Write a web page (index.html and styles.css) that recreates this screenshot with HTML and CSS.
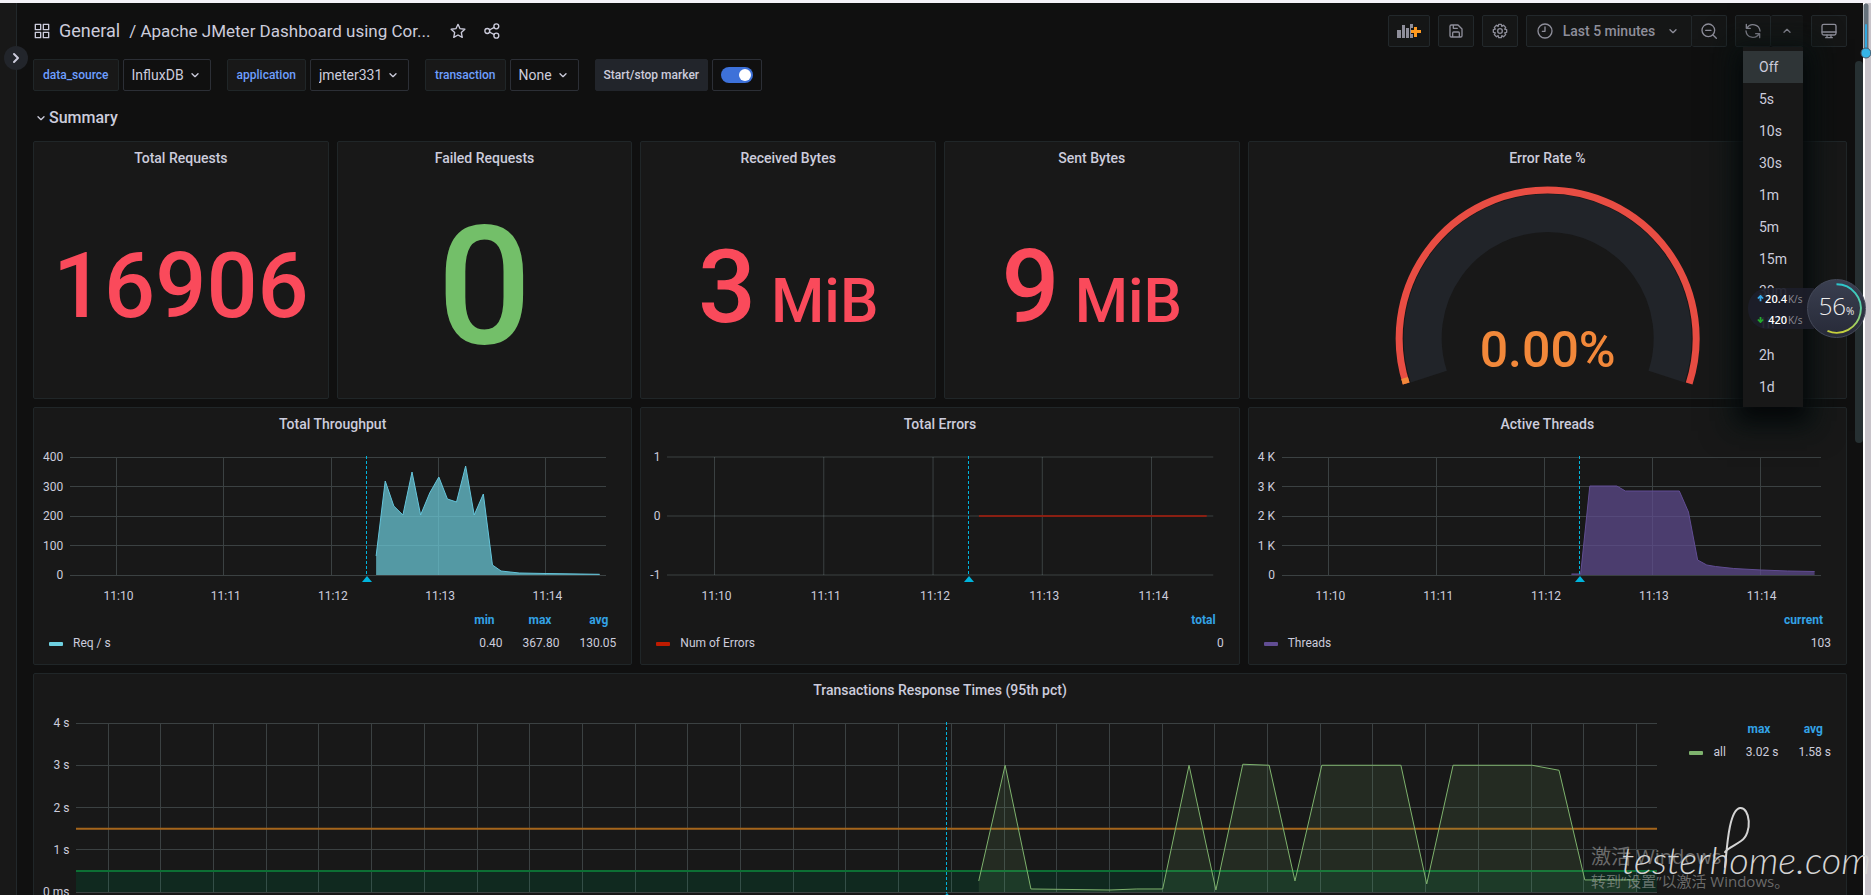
FILE: index.html
```html
<!DOCTYPE html>
<html lang="en">
<head>
<meta charset="utf-8">
<title>Apache JMeter Dashboard</title>
<link rel="stylesheet" href="styles.css">
</head>
<body>
<svg class="defs" aria-hidden="true">
  <symbol id="chev" viewBox="0 0 24 24"><path d="M7.500 10l4.500 4.500 4.500-4.500"/></symbol>
  <symbol id="chev-up" viewBox="0 0 24 24"><path d="M7.500 14l4.500-4.500 4.500 4.500"/></symbol>
</svg>
<div class="app">
  <nav class="sidebar">
    <button class="expand" aria-label="Expand sidebar"><svg class="icon bold" viewBox="0 0 24 24"><path d="M9 6l6 6-6 6"/></svg></button>
  </nav>
  <main class="main">
    <header class="header">
      <svg class="icon title-icon" viewBox="0 0 24 24"><path d="M2 2h8v8H2zM14 2h8v8h-8zM2 14h8v8H2zM14 14h8v8h-8z"/></svg>
      <h1 class="title"><a href="#">General</a><a href="#" class="name">/ Apache JMeter Dashboard using Cor...</a></h1>
      <button class="bare" aria-label="Mark as favorite"><svg class="icon" viewBox="0 0 24 24"><path d="M12 2l3.100 6.500 7.200.9-5.300 4.900 1.400 7.200L12 18l-6.400 3.500L7 14.300 1.700 9.400l7.200-.9z"/></svg></button>
      <button class="bare" aria-label="Share dashboard"><svg class="icon" viewBox="0 0 24 24"><circle cx="5" cy="12" r="3.700"/><circle cx="18.500" cy="5" r="3.700"/><circle cx="18.500" cy="19" r="3.700"/><path d="M8 10.500l7.500-4M8 13.500l7.500 4"/></svg></button>
      <div class="toolbar">
        <button class="tool add" aria-label="Add panel"><svg class="add-icon" viewBox="0 0 26 16"><path class="bars" d="M1 7h4v8H1zM6 2h3v13H6zM10 5h3v10h-3zM14 1h3v4h-2v6h2v4h-3z"/><path class="plus" d="M18 4h3v3h4v3h-4v4h-3v-4h-3V7h3z"/></svg></button>
        <button class="tool" aria-label="Save dashboard"><svg class="icon" viewBox="0 0 24 24"><path d="M3 5a2 2 0 0 1 2-2h10l6 6v10a2 2 0 0 1-2 2H5a2 2 0 0 1-2-2zM8 3v5h6M7 21v-6a1.500 1.500 0 0 1 1.500-1.500h7A1.500 1.500 0 0 1 17 15v6"/></svg></button>
        <button class="tool" aria-label="Dashboard settings"><svg class="icon" viewBox="0 0 24 24"><path d="M10 2h4l.7 3 2.600-1.600 3.200 3.200L19 9.300l3 .7v4l-3 .7 1.500 2.700-3.200 3.200-2.600-1.600L14 22h-4l-.7-3-2.600 1.600-3.200-3.200L5 14.700 2 14v-4l3-.7-1.500-2.700 3.200-3.200L9.300 5z"/><circle cx="12" cy="12" r="3.500"/></svg></button>
        <div class="group">
          <button class="tool range"><svg class="icon" viewBox="0 0 24 24"><circle cx="12" cy="12" r="10.500"/><path d="M12 6v6.500H8"/></svg><span>Last 5 minutes</span><svg class="icon"><use href="#chev"/></svg></button>
          <button class="tool zoom" aria-label="Zoom out"><svg class="icon" viewBox="0 0 24 24"><circle cx="11" cy="11" r="9.500"/><path d="M7 11h8M18 18L23 23"/></svg></button>
        </div>
        <div class="group">
          <button class="tool" aria-label="Refresh"><svg class="icon" viewBox="0 0 24 24"><path d="M2 2v6h6M22 22v-6h-6M2.800 8A10.500 10.500 0 0 1 22.500 12M21.200 16A10.500 10.500 0 0 1 1.500 12"/></svg></button>
          <button class="tool narrow" aria-label="Refresh interval" aria-expanded="true"><svg class="icon"><use href="#chev-up"/></svg></button>
          <div class="menu">
            <button class="on">Off</button><button>5s</button><button>10s</button><button>30s</button><button>1m</button><button>5m</button><button>15m</button><button>30m</button><button>1h</button><button>2h</button><button>1d</button>
          </div>
        </div>
        <button class="tool" aria-label="Cycle view mode"><svg class="icon" viewBox="0 0 24 24"><rect x="1.500" y="2" width="21" height="16" rx="2.500"/><path d="M1.500 13.500h21M9 18v4M15 18v4M7 22h10"/></svg></button>
      </div>
    </header>

    <form class="vars">
      <div class="var"><label for="ds">data_source</label><span class="pick"><select id="ds"><option>InfluxDB</option></select><svg class="icon"><use href="#chev"/></svg></span></div>
      <div class="var"><label for="ap">application</label><span class="pick"><select id="ap"><option>jmeter331</option></select><svg class="icon"><use href="#chev"/></svg></span></div>
      <div class="var"><label for="tr">transaction</label><span class="pick"><select id="tr"><option>None</option></select><svg class="icon"><use href="#chev"/></svg></span></div>
      <div class="var"><label class="marker-label" for="mk">Start/stop marker</label><span class="switch-box"><input class="switch" type="checkbox" id="mk" checked></span></div>
    </form>

    <button class="row-title"><svg class="icon"><use href="#chev"/></svg>Summary</button>

    <div class="grid">
      <section class="panel w4"><h2>Total Requests</h2><div class="stat red s90">16906</div></section>
      <section class="panel w4"><h2>Failed Requests</h2><div class="stat green s166">0</div></section>
      <section class="panel w4"><h2>Received Bytes</h2><div class="stat red s102"><span>3<span class="unit"> MiB</span></span></div></section>
      <section class="panel w4"><h2>Sent Bytes</h2><div class="stat red s102"><span>9<span class="unit"> MiB</span></span></div></section>
      <section class="panel w8"><h2>Error Rate %</h2>
        <svg class="gauge" viewBox="0 0 320 224">
          <path class="track" d="M41.100 202.600a125 125 0 1 1 237.800 0"/>
          <path class="limit" d="M18.500 209.500a148.500 148.500 0 1 1 283 0"/>
          <path class="low" d="M18.500 209.500l-1.600-5.500"/>
          <text x="160" y="193">0.00%</text>
        </svg>
      </section>

      <section class="panel w8"><h2>Total Throughput</h2>
        <div class="chart">
          <div class="y"><span>400</span><span>300</span><span>200</span><span>100</span><span>0</span></div>
          <div class="plot">
            <svg viewBox="0 0 1000 118" preserveAspectRatio="none">
              <path class="lines" d="M0 0H1000M0 29.500H1000M0 59H1000M0 88.500H1000M0 118H1000M87 0V118M287 0V118M487 0V118M687 0V118M887 0V118"/>
              <path class="area cyan" d="M571 118V99L588 24 604 49 621 58 638 15 654 58 671 36 688 20 704 42 721 45 738 9 754 58 771 37 788 108 804 114 821 115 838 116 888 116.500 988 117.300V118"/>
              <path class="curve cyan" d="M571 99L588 24 604 49 621 58 638 15 654 58 671 36 688 20 704 42 721 45 738 9 754 58 771 37 788 108 804 114 821 115 838 116 888 116.500 988 117.300"/>
            </svg>
            <i class="mark" style="left:55.100%"></i>
          </div>
          <div class="x"><span>11:10</span><span>11:11</span><span>11:12</span><span>11:13</span><span>11:14</span></div>
        </div>
        <table class="legend">
          <tr><th></th><th>min</th><th>max</th><th>avg</th></tr>
          <tr><td><i class="sw cyan"></i>Req / s</td><td>0.40</td><td>367.80</td><td>130.05</td></tr>
        </table>
      </section>

      <section class="panel w8"><h2>Total Errors</h2>
        <div class="chart">
          <div class="y"><span>1</span><span>0</span><span>-1</span></div>
          <div class="plot">
            <svg viewBox="0 0 1000 118" preserveAspectRatio="none">
              <path class="lines" d="M0 0H1000M0 59H1000M0 118H1000M87 0V118M287 0V118M487 0V118M687 0V118M887 0V118"/>
              <path class="curve red-line" d="M571 59H988"/>
            </svg>
            <i class="mark" style="left:55.100%"></i>
          </div>
          <div class="x"><span>11:10</span><span>11:11</span><span>11:12</span><span>11:13</span><span>11:14</span></div>
        </div>
        <table class="legend">
          <tr><th></th><th>total</th></tr>
          <tr><td><i class="sw crimson"></i>Num of Errors</td><td>0</td></tr>
        </table>
      </section>

      <section class="panel w8"><h2>Active Threads</h2>
        <div class="chart">
          <div class="y"><span>4 K</span><span>3 K</span><span>2 K</span><span>1 K</span><span>0</span></div>
          <div class="plot">
            <svg viewBox="0 0 1000 118" preserveAspectRatio="none">
              <path class="lines" d="M0 0H1000M0 29.500H1000M0 59H1000M0 88.500H1000M0 118H1000M87 0V118M287 0V118M487 0V118M687 0V118M887 0V118"/>
              <path class="area violet" d="M537 118V117H554L571 29H621L637 34H737L754 55 771 103 788 108 804 109.500 838 111.500 889 113 938 114 988 114.500V118"/>
              <path class="curve violet" d="M537 117H554L571 29H621L637 34H737L754 55 771 103 788 108 804 109.500 838 111.500 889 113 938 114 988 114.500"/>
            </svg>
            <i class="mark" style="left:55.100%"></i>
          </div>
          <div class="x"><span>11:10</span><span>11:11</span><span>11:12</span><span>11:13</span><span>11:14</span></div>
        </div>
        <table class="legend">
          <tr><th></th><th>current</th></tr>
          <tr><td><i class="sw violet"></i>Threads</td><td>103</td></tr>
        </table>
      </section>

      <section class="panel w24"><h2>Transactions Response Times (95th pct)</h2>
        <div class="wide">
          <div class="chart tall">
            <div class="y"><span>4 s</span><span>3 s</span><span>2 s</span><span>1 s</span><span>0 ms</span></div>
            <div class="plot">
              <svg viewBox="0 0 3000 168" preserveAspectRatio="none">
                <rect class="ok-zone" x="0" y="147" width="3000" height="21"/>
                <path class="lines" d="M0 0H3000M0 42H3000M0 84H3000M0 126H3000M0 168H3000M61 0v168m100-168v168m100-168v168m100-168v168m100-168v168m100-168v168m100-168v168m100-168v168m100-168v168m100-168v168m100-168v168m100-168v168m100-168v168m100-168v168m100-168v168m100-168v168m100-168v168m100-168v168m100-168v168m100-168v168m100-168v168m100-168v168m100-168v168m100-168v168m100-168v168m100-168v168m100-168v168m100-168v168m100-168v168m100-168v168"/>
                <path class="warn-line" d="M0 105H3000"/><path class="ok-line" d="M0 147H3000"/>
                <path class="area leaf" d="M1713 168V157L1763 42 1812 165 1962 166 2013 165H2062L2112 42 2163 166 2214 41 2264 42 2313 157 2364 42H2514L2563 160 2613 42H2763L2814 47 2863 156H2963V168"/>
                <path class="curve leaf" d="M1713 157L1763 42 1812 165 1962 166 2013 165H2062L2112 42 2163 166 2214 41 2264 42 2313 157 2364 42H2514L2563 160 2613 42H2763L2814 47 2863 156H2963"/>
              </svg>
              <i class="mark" style="left:55%"></i>
            </div>
          </div>
          <table class="legend side">
            <tr><th></th><th>max</th><th>avg</th></tr>
            <tr><td><i class="sw leaf"></i>all</td><td>3.02 s</td><td>1.58 s</td></tr>
          </table>
        </div>
      </section>
    </div>
  </main>
  <div class="scroll"><i></i></div>
  <div class="edge"></div>

  <div class="activate" lang="zh"><p>激活 Windows</p><p class="sub">转到“设置”以激活 Windows。</p></div>
  <div class="brand">testerhome.com<svg viewBox="0 0 40 64"><path d="M9 62C11 42 13 5 24 3 34 2 37 28 25 36 18 41 12 43 9 47"/></svg></div>

  <svg class="slider" viewBox="0 0 14 60"><path class="rail" d="M7 3V50"/><path class="fill" d="M7 22V50"/><circle cx="7" cy="50" r="5"/></svg>

  <div class="monitor">
    <div class="rates">
      <p><svg viewBox="0 0 8 8"><path class="up" d="M4 1v6M1 4l3-3 3 3"/></svg><b>20.4</b><span>K/s</span></p>
      <p><svg viewBox="0 0 8 8"><path class="down" d="M4 1v6M1 4l3 3 3-3"/></svg><b>420</b><span>K/s</span></p>
    </div>
    <div class="dial">
      <svg viewBox="0 0 60 60"><defs><linearGradient id="g" x1="0" y1="0" x2="0" y2="1"><stop offset="0" stop-color="#2cc6cc"/><stop offset=".5" stop-color="#5fd0a0"/><stop offset="1" stop-color="#c8cf3a"/></linearGradient></defs><path d="M30 4.500A25.500 25.500 0 1 1 20.500 53.600"/></svg>
      <span>56<small>%</small></span>
    </div>
  </div>
</div>
</body>
</html>
```
FILE: styles.css
```css
* { box-sizing: border-box; }
body { margin: 0; background: #101010; color: #ccccdc; font: 14px/20px Roboto, "Noto Sans CJK SC", sans-serif; }
button, select, input { font: inherit; color: inherit; margin: 0; }
button { background: none; border: 0; padding: 0; }
a { color: inherit; text-decoration: none; }
h1, h2, p { margin: 0; font-weight: 400; }
.defs { position: absolute; width: 0; height: 0; }
.icon { width: 16px; height: 16px; flex: none; fill: none; stroke: currentColor; stroke-width: 2; stroke-linecap: round; stroke-linejoin: round; }

.app { position: relative; display: flex; height: 100vh; overflow: hidden; border-top: 3px solid #f4f2f8; }
.sidebar { position: relative; flex: none; width: 17px; background: #181818; border-right: 1px solid #22282b; }
.expand { position: absolute; z-index: 2; top: 43px; left: 4px; width: 24px; height: 24px; border-radius: 50%; background: #22252b; display: grid; place-items: center; }
.bold { stroke-width: 3; }
.main { flex: 1; min-width: 0; padding: 12px 8px 0 16px; }
.scroll { flex: none; width: 8px; padding-top: 58px; }
.scroll i { display: block; height: 382px; border-radius: 4px; background: #263032; }
.edge { flex: none; width: 8px; background: #c8c4ca; border-left: 2px solid #fff; }

.header { display: flex; align-items: center; height: 32px; padding-left: 1px; }
.title-icon, .bare .icon { stroke-width: 2; }
.title { display: flex; align-items: baseline; gap: 9px; font-size: 18px; line-height: 24px; margin-left: 9px; margin-right: 20px; white-space: nowrap; }
.name { font-size: 17px; }
.bare { width: 16px; height: 16px; margin-right: 18px; }
.bare .icon { display: block; }
.toolbar { display: flex; gap: 8px; margin-left: auto; color: #8e8e9a; }
.tool { display: flex; align-items: center; justify-content: center; width: 36px; height: 32px; background: #151616; border: 1px solid #22282b; border-radius: 2px; }
.tool.add { width: 42px; }
.tool.zoom { width: 35px; }
.add-icon { width: 26px; height: 16px; }
.bars { fill: #8e8e9a; }
.plus { fill: #ff9a1f; }
.group { position: relative; display: flex; }
.group .tool + .tool { border-left: 0; }
.range { width: 166px; gap: 10px; font-weight: 500; }
.tool.narrow { width: 32px; border-right: 0; }
.menu { position: absolute; z-index: 3; top: 32px; right: 0; width: 60px; padding: 4px 0; background: #181818; box-shadow: 0 10px 20px 4px #050709, 0 8px 24px 16px rgba(12, 24, 22, .6); color: #ccccdc; }
.menu button { display: block; width: 100%; height: 32px; padding-left: 16px; text-align: left; }
.menu .on { background: #2f3537; }

.vars { display: flex; gap: 16px; margin-top: 12px; }
.var { display: flex; gap: 4px; }
.var label { display: flex; align-items: center; height: 32px; padding: 0 9px; border: 1px solid #202628; border-radius: 2px; background: #181818; color: #6e9fff; font-size: 12px; font-weight: 500; }
.var .marker-label { background: #22252b; border-color: #22252b; color: #ccccdc; padding: 0 8px; }
.pick { display: flex; align-items: center; gap: 2px; height: 32px; padding: 0 7px 0 8px; border: 1px solid #2c2f36; border-radius: 2px; }
.pick select { appearance: none; border: 0; padding: 0; background: none; }
.switch-box { display: flex; align-items: center; height: 32px; padding: 0 8px; border: 1px solid #2c2f36; border-radius: 2px; }
.switch { appearance: none; width: 32px; height: 16px; padding: 2px; border-radius: 8px; background: #3d71d9; display: flex; justify-content: flex-end; }
.switch::before { content: ""; width: 12px; height: 12px; border-radius: 50%; background: #fff; }
.row-title { display: flex; align-items: center; height: 24px; margin: 15px 0 11px; font-size: 16px; font-weight: 500; }

.grid { display: grid; grid-template-columns: repeat(24, 1fr); grid-auto-rows: 258px; gap: 8px; }
.panel { display: flex; flex-direction: column; min-width: 0; background: #181818; border: 1px solid #202628; border-radius: 2px; }
.w4 { grid-column: span 4; }
.w8 { grid-column: span 8; }
.w24 { grid-column: span 24; }
.panel h2 { flex: none; height: 32px; font-size: 14px; line-height: 32px; font-weight: 500; text-align: center; }
.stat { flex: 1; display: flex; align-items: center; justify-content: center; padding-top: 2px; line-height: 1; font-weight: 500; white-space: pre; }
.red { color: #fa4a5b; }
.green { color: #73bf69; }
.s90 { font-size: 90px; }
.s166 { font-size: 166px; }
.s102 { font-size: 102px; }
.unit { font-size: 61px; }
.gauge { flex: 1; min-height: 0; width: 100%; fill: none; }
.track { stroke: #212429; stroke-width: 38; }
.limit { stroke: #e84d43; stroke-width: 7; }
.low { stroke: #f2883a; stroke-width: 7; }
.gauge text { fill: #f2883a; font-size: 50px; font-weight: 500; text-anchor: middle; }

.chart { display: grid; grid-template-columns: auto 1fr; grid-template-rows: 118px 16px; gap: 13px 7px; margin: 17px 25px 0 9px; font-size: 12px; line-height: 12px; }
.y { display: flex; flex-direction: column; justify-content: space-between; margin: -6px 0; text-align: right; }
.plot { position: relative; }
.plot svg { display: block; width: 100%; height: 100%; overflow: visible; fill: none; }
.plot path { vector-effect: non-scaling-stroke; }
.lines { stroke: rgba(200, 230, 235, .2); shape-rendering: crispEdges; }
.mark { position: absolute; top: -1px; bottom: -1px; width: 1px; background: repeating-linear-gradient(#00b4dc 0 3px, transparent 3px 5px); }
.mark::after { content: ""; position: absolute; top: 100%; left: -4px; border: solid transparent; border-width: 0 5px 6px; border-bottom-color: #00b4dc; }
.x { grid-column: 2; display: grid; grid-template-columns: repeat(5, 20%); margin-left: -1%; margin-right: 1%; line-height: 16px; text-align: center; }
.area.cyan { fill: #6ed0e0; fill-opacity: .7; }
.curve.cyan { stroke: #65c5db; }
.area.violet { fill: #614d93; fill-opacity: .7; }
.curve.violet { stroke: #614d93; }
.area.leaf { fill: #7eb26d; fill-opacity: .12; }
.curve.leaf { stroke: #7eb26d; }
.red-line { stroke: #8a1f12; stroke-width: 2; }
.ok-zone { fill: #10291f; }
.ok-line { stroke: #0c7034; stroke-width: 2; }
.warn-line { stroke: #a5651b; stroke-width: 2; }

.legend { border-collapse: collapse; margin: 5px 15px 0; font-size: 12px; line-height: 23px; }
.legend td, .legend th { padding: 0 0 0 20px; text-align: right; white-space: nowrap; }
.legend th { padding-right: 8px; color: #33a2e5; font-weight: 700; }
.legend td:first-child { width: 100%; padding-left: 0; text-align: left; }
.sw { display: inline-block; width: 14px; height: 4px; margin-right: 10px; border-radius: 1px; vertical-align: middle; }
.sw.cyan { background: #6ed0e0; }
.sw.crimson { background: #bf1b00; }
.sw.violet { background: #614d93; }
.sw.leaf { background: #7eb26d; }
.wide { display: flex; align-items: flex-start; }
.tall { flex: 1; grid-template-rows: 169px; margin-right: 32px; }
.side { flex: none; margin: 12px 15px 0 0; }

.activate { position: absolute; left: calc(100% - 280px); bottom: 4px; color: rgba(190, 190, 190, .5); font-family: "Open Sans", "Noto Sans CJK SC", sans-serif; font-size: 20px; line-height: 28px; white-space: nowrap; }
.activate .sub { font-size: 15px; line-height: 20px; }
.brand { position: absolute; right: 0; bottom: 14px; color: #d4d4d4; font: italic 300 38px/44px Lato, sans-serif; white-space: nowrap; }
.brand svg { position: absolute; left: 94px; bottom: 12px; width: 40px; height: 64px; fill: none; stroke: #d4d4d4; stroke-width: 2; stroke-linecap: round; }
.slider { position: absolute; z-index: 4; top: 0; right: -2px; width: 14px; height: 60px; fill: none; stroke-linecap: round; }
.rail { stroke: #66727c; stroke-width: 5; }
.fill { stroke: #31a8e0; stroke-width: 2; }
.slider circle { fill: #35b4e6; stroke: #46596a; }

.monitor { position: absolute; z-index: 5; top: 276px; right: 5px; display: flex; align-items: center; }
.rates { width: 66px; height: 41px; margin-right: -7px; padding-left: 9px; border-radius: 20px 0 0 20px; background: rgba(29, 30, 42, .93); font: 11px/20px "Open Sans", sans-serif; }
.rates p { display: flex; align-items: center; height: 21px; gap: 1px; }
.rates b { width: 22px; color: #fff; font-weight: 600; text-align: right; }
.rates span { font-size: 10px; color: #8c8c94; }
.rates svg { width: 7px; height: 7px; fill: none; stroke-width: 2; }
.up { stroke: #35a8ea; }
.down { stroke: #22a82c; }
.dial { position: relative; width: 59px; height: 59px; border-radius: 50%; background: linear-gradient(#3a3f50, #272a38); border: 1px solid #454a5a; display: grid; place-items: center; color: #eee; font: 300 24px/28px "Open Sans", sans-serif; }
.dial svg { position: absolute; inset: 0; width: 100%; height: 100%; fill: none; stroke: url(#g); stroke-width: 2; }
.dial small { font-size: 10px; font-weight: 400; }
```
